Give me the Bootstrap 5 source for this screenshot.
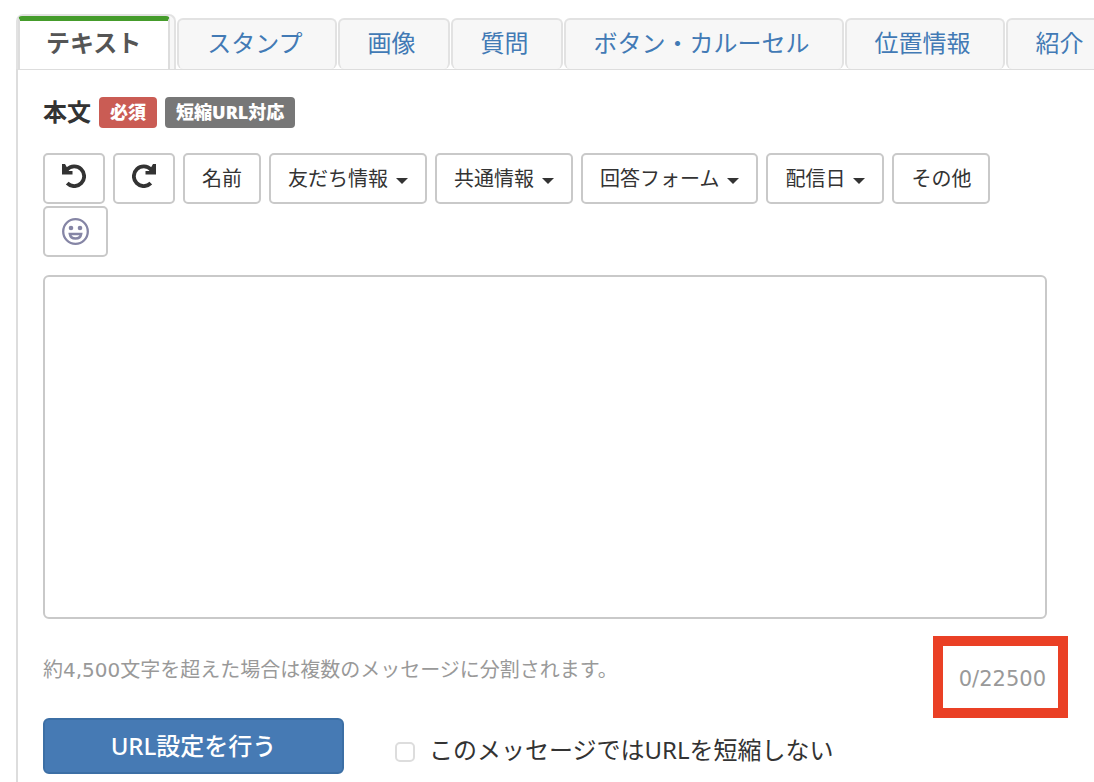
<!DOCTYPE html>
<html lang="ja">
<head>
<meta charset="utf-8">
<meta name="viewport" content="width=device-width, initial-scale=1">
<title>メッセージ作成</title>
<link href="https://cdn.jsdelivr.net/npm/bootstrap@5.3.0/dist/css/bootstrap.min.css" rel="stylesheet">
<style>
  body { font-family: "Noto Sans", "Noto Sans CJK JP", sans-serif; font-size: 24px; line-height: 32px; color: #333; background: #fff; }
  .editor { padding: 14px 0 0 16px; overflow: hidden; min-height: 100vh; }
  .type-tabs { gap: 1px; border: 0; }
  .type-tabs .nav-link { border: 2px solid #e2e2e2; border-bottom: 0; border-radius: 6px; background: #f7f7f7; color: #427ab5; white-space: nowrap; margin: 0; height: 51px; padding: 7px 32px 0 28px; }
  .type-tabs .current-tab { border: 2px solid #e2e2e2; border-bottom: 0; border-radius: 7px 7px 0 0; background: #f7f7f7; height: 55px; padding-right: 4px; }
  .type-tabs .current-tab .nav-link.active { border: solid #ddd; border-width: 5px 2px 0; border-top-color: #459c2b; border-radius: 4px 4px 0 0; background: #fff; color: #555; font-weight: 700; height: 53px; padding: 6px 27px 0 26px; }
  .editor-body { border-left: 2px solid #ddd; border-top: 1px solid #ddd; padding: 26px 47px 7px 25px; flex: 1; }
  .tag { font-size: 18px; line-height: 31px; padding: 0 11px; border-radius: 4px; font-weight: 900; }
  .tag-required { background: #ca5c54; }
  .tag-short { background: #777; }
  .toolbar { gap: 2px 8px; margin-top: 25px; }
  .tool { border: 2px solid #c9c9c9; border-radius: 5px; background: #fff; color: #333; font-size: 20px; line-height: 30px; height: 51px; padding: 0 17px; }
  .tool-history { padding-bottom: 5px; }
  .tool.dropdown-toggle::after { border-top: 6px solid; border-left: 6px solid transparent; border-right: 6px solid transparent; margin-left: 8px; vertical-align: 2px; }
  .message { border: 2px solid #c9c9c9; border-radius: 6px; height: 344px; margin-top: 18px; resize: none; }
  .meta { margin-top: 17px; }
  .hint { font: 20px/30px "DejaVu Sans", "Noto Sans CJK JP", sans-serif; color: #999; padding-top: 19px; }
  .counter { border: 10px solid #ea4025; font: 21px/30px "DejaVu Sans", sans-serif; color: #999; padding: 18px 12px 14px 16px; margin-right: -21px; }
  .btn-url { width: 301px; height: 56px; background: #467ab4; border: 2px solid #3c6fa5; border-radius: 6px; color: #fff; font-size: 24px; line-height: 32px; font-weight: 500; padding: 0; }
  .no-short { margin-left: 51px; padding-top: 8px; gap: 14px; }
  .no-short .form-check-input { width: 20px; height: 20px; margin: 4px 0 0; border: 2px solid #ddd; border-radius: 5px; }
</style>
</head>
<body>
<main class="editor d-flex flex-column">
  <ul class="nav nav-tabs type-tabs flex-nowrap align-items-end">
    <li class="current-tab"><a class="nav-link active" href="#" aria-current="page">テキスト</a></li>
    <li><a class="nav-link" href="#">スタンプ</a></li>
    <li><a class="nav-link" href="#">画像</a></li>
    <li><a class="nav-link" href="#">質問</a></li>
    <li><a class="nav-link" href="#">ボタン・カルーセル</a></li>
    <li><a class="nav-link" href="#">位置情報</a></li>
    <li><a class="nav-link" href="#">紹介</a></li>
  </ul>
  <section class="editor-body">
    <div class="d-flex align-items-center">
      <label class="fw-bold" for="message">本文</label>
      <span class="tag tag-required text-white ms-2">必須</span>
      <span class="tag tag-short text-white ms-2">短縮URL対応</span>
    </div>
    <div class="toolbar d-flex flex-wrap">
      <button type="button" class="btn tool tool-history" aria-label="元に戻す"><svg class="d-block" width="24" height="24" viewBox="0 0 24 24" fill="none" stroke="#333" stroke-width="3.8"><path d="M5 5.500A9.900 9.900 0 1 1 5.200 19.200"/><path d="M0 0h3l4 7h3.500v3.500H0z" fill="#333" stroke="none"/></svg></button>
      <button type="button" class="btn tool tool-history" aria-label="やり直す"><svg class="d-block" width="24" height="24" viewBox="0 0 24 24" fill="none" stroke="#333" stroke-width="3.8"><path d="M19 5.500A9.900 9.900 0 1 0 18.800 19.200"/><path d="M24 0h-3l-4 7h-3.500v3.500H24z" fill="#333" stroke="none"/></svg></button>
      <button type="button" class="btn tool">名前</button>
      <button type="button" class="btn tool dropdown-toggle">友だち情報</button>
      <button type="button" class="btn tool dropdown-toggle">共通情報</button>
      <button type="button" class="btn tool dropdown-toggle">回答フォーム</button>
      <button type="button" class="btn tool dropdown-toggle">配信日</button>
      <button type="button" class="btn tool">その他</button>
      <button type="button" class="btn tool" aria-label="絵文字"><svg class="d-block" width="27" height="27" viewBox="0 0 27 27"><circle cx="13.5" cy="13.5" r="12.3" fill="none" stroke="#8585a5" stroke-width="2.3"/><circle cx="9" cy="10" r="2.300" fill="#8585a5"/><circle cx="18" cy="10" r="2.300" fill="#8585a5"/><path d="M7.800 16h11.400q-.7 4.500-5.700 4.500t-5.700-4.500z" fill="none" stroke="#8585a5" stroke-width="2.4"/></svg></button>
    </div>
    <textarea class="form-control message" id="message"></textarea>
    <div class="meta d-flex justify-content-between align-items-start">
      <p class="hint mb-0">約4,500文字を超えた場合は複数のメッセージに分割されます。</p>
      <div class="counter">0/22500</div>
    </div>
    <div class="d-flex align-items-center">
      <button type="button" class="btn btn-url">URL設定を行う</button>
      <div class="no-short d-flex align-items-center">
        <input class="form-check-input" type="checkbox" id="noShort">
        <label for="noShort">このメッセージではURLを短縮しない</label>
      </div>
    </div>
  </section>
</main>
<script src="https://cdn.jsdelivr.net/npm/bootstrap@5.3.0/dist/js/bootstrap.bundle.min.js"></script>
</body>
</html>
